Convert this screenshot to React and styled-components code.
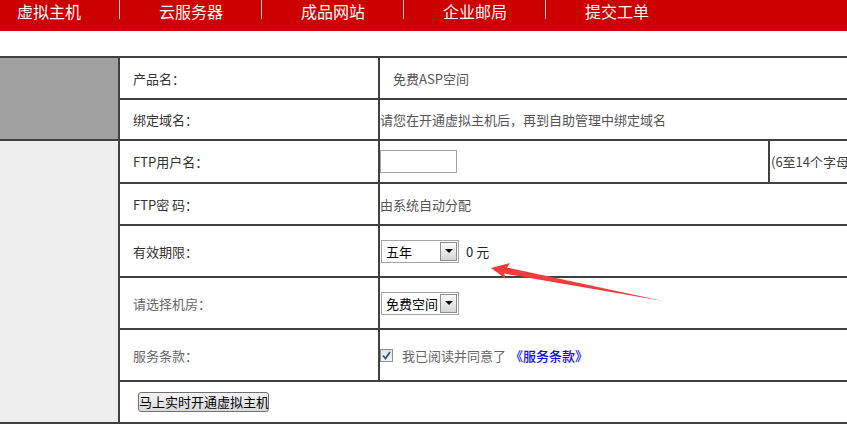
import React from "react";
import styled, { createGlobalStyle } from "styled-components";

const Global = createGlobalStyle`
  html, body { margin: 0; padding: 0; background: #fff; }
  body { font-family: "Noto Sans CJK SC", "Microsoft YaHei", sans-serif; overflow: hidden; }
  #root { width: 847px; }
`;

const Page = styled.div`
  position: relative;
  width: 847px;
  height: 443px;
  overflow: hidden;
`;

const Nav = styled.nav`
  height: 31px;
  background: #cc0000;
  display: flex;
  margin-left: -22px;
`;

const NavItem = styled.div`
  width: 142px;
  height: 31px;
  display: flex;
  flex-shrink: 0;
`;

const NavLabel = styled.span`
  flex: 1;
  text-align: center;
  color: #fff;
  font-size: 16px;
  line-height: 23px;
  padding-left: 1px;
`;

const NavSep = styled.span`
  width: 1px;
  height: 19px;
  background: ${(p) => (p.$hidden ? "transparent" : "#c4d6d6")};
`;

const Spacer = styled.div`
  height: 25px;
`;

const Table = styled.div`
  display: grid;
  grid-template-columns: 118px 258px 388px 200px;
  grid-template-rows: 40px 39px 41px 40px 50px 50px 50px 40px;
  gap: 2px;
  padding: 2px 0;
  background: #404040;
  width: 970px;
  font-size: 13px;
`;

const Side = styled.div`
  grid-column: 1;
  grid-row: ${(p) => p.$rows};
  background: ${(p) => p.$bg};
`;

const Label = styled.div`
  background: #fff;
  display: flex;
  align-items: center;
  padding-left: 13px;
  color: ${(p) => (p.$light ? "#666" : "#333")};
  grid-column: ${(p) => p.$span || "auto"};
  white-space: pre;
`;

const Value = styled.div`
  background: #fff;
  display: flex;
  align-items: center;
  padding-left: ${(p) => p.$pad || 0}px;
  color: ${(p) => p.$color || "#555"};
  grid-column: ${(p) => p.$span || "auto"};
  white-space: nowrap;
`;

const TextInput = styled.input`
  box-sizing: border-box;
  width: 77px;
  height: 23px;
  border: 1px solid #a4a4a4;
  margin: 0;
  padding: 0 2px;
  font: inherit;
  outline: none;
`;

const Select = styled.div`
  box-sizing: border-box;
  display: inline-flex;
  align-items: stretch;
  width: 78px;
  height: 23px;
  border: 1px solid #a5a5a5;
  background: #fff;
  margin-left: 1px;
`;

const SelectText = styled.span`
  flex: 1;
  display: flex;
  align-items: center;
  padding-left: 4px;
  color: #000;
  font-size: 13px;
`;

const SelectBtn = styled.span`
  box-sizing: border-box;
  width: 17px;
  margin: 1px;
  border: 1px solid #8d8d8d;
  background: linear-gradient(#fafafa, #d6d6d6);
  display: flex;
  align-items: center;
  justify-content: center;
  &::after {
    content: "";
    border-left: 4px solid transparent;
    border-right: 4px solid transparent;
    border-top: 4px solid #000;
  }
`;

const Price = styled.span`
  margin-left: 7px;
  color: #222;
  white-space: pre;
`;

const Check = styled.span`
  box-sizing: border-box;
  width: 13px;
  height: 13px;
  border: 1px solid #8f8f8f;
  background: linear-gradient(#dfe3ea, #f4f5f7);
  display: inline-flex;
  align-items: center;
  justify-content: center;
  margin-right: 9px;
`;

const Link = styled.a`
  color: #0a0aff;
  text-decoration: none;
  margin-left: 4px;
  font-weight: 500;
`;

const Button = styled.button`
  margin-left: 5px;
  height: 20px;
  width: 131px;
  padding: 0;
  border: 1px solid #707070;
  border-radius: 3px;
  background: linear-gradient(#f2f2f2, #dadada);
  font: inherit;
  font-size: 13px;
  line-height: 18px;
  color: #000;
  white-space: nowrap;
  overflow: hidden;
`;

const Arrow = styled.svg`
  position: absolute;
  left: 0;
  top: 0;
  pointer-events: none;
`;

const navItems = ["虚拟主机", "云服务器", "成品网站", "企业邮局", "提交工单"];

export default function App() {
  return (
    <>
      <Global />
      <Page>
        <Nav>
          {navItems.map((t, i) => (
            <NavItem key={t}>
              <NavLabel>{t}</NavLabel>
              <NavSep $hidden={i === navItems.length - 1} />
            </NavItem>
          ))}
        </Nav>
        <Spacer />
        <Table>
          <Side $rows="1 / span 2" $bg="#a0a0a0" />
          <Side $rows="3 / span 6" $bg="#eeeeee" />

          <Label>产品名：</Label>
          <Value $span="3 / span 2" $pad={13} $color="#555">免费ASP空间</Value>

          <Label>绑定域名：</Label>
          <Value $span="3 / span 2" $color="#555">请您在开通虚拟主机后，再到自助管理中绑定域名</Value>

          <Label>FTP用户名：</Label>
          <Value>
            <TextInput type="text" />
          </Value>
          <Value $pad={1} $color="#444">(6至14个字母或数字组成)</Value>

          <Label>{"FTP密 码："}</Label>
          <Value $span="3 / span 2" $color="#555">由系统自动分配</Value>

          <Label>有效期限：</Label>
          <Value $span="3 / span 2">
            <Select>
              <SelectText>五年</SelectText>
              <SelectBtn />
            </Select>
            <Price>{"0 元"}</Price>
          </Value>

          <Label $light>请选择机房：</Label>
          <Value $span="3 / span 2">
            <Select>
              <SelectText>免费空间</SelectText>
              <SelectBtn />
            </Select>
          </Value>

          <Label $light>服务条款：</Label>
          <Value $span="3 / span 2" $color="#666">
            <Check>
              <svg width="9" height="9" viewBox="0 0 9 9">
                <path d="M1 4.5 L3.5 7.5 L8 1" fill="none" stroke="#3b4f8a" strokeWidth="1.8" />
              </svg>
            </Check>
            我已阅读并同意了<Link href="#">《服务条款》</Link>
          </Value>

          <Label $span="2 / span 3">
            <Button>马上实时开通虚拟主机</Button>
          </Label>
        </Table>
        <Arrow width="847" height="443" viewBox="0 0 847 443">
          <polygon
            points="491,268 510,263 507,267.5 663,301 504,273.5 506,279"
            fill="#f23b3b"
          />
        </Arrow>
      </Page>
    </>
  );
}
